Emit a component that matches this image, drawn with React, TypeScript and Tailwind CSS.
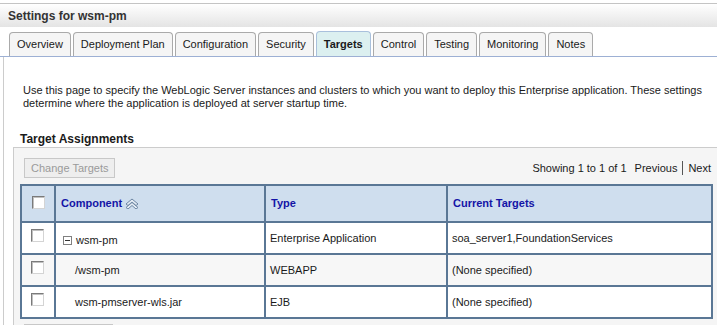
const tabs = [
  "Overview",
  "Deployment Plan",
  "Configuration",
  "Security",
  "Targets",
  "Control",
  "Testing",
  "Monitoring",
  "Notes",
];

const rows = [
  { name: "wsm-pm", type: "Enterprise Application", targets: "soa_server1,FoundationServices", tree: true },
  { name: "/wsm-pm", type: "WEBAPP", targets: "(None specified)", tree: false },
  { name: "wsm-pmserver-wls.jar", type: "EJB", targets: "(None specified)", tree: false },
];

const CheckBox = () => (
  <span className="inline-block w-[13px] h-[13px] border border-[#7a7a7a] border-r-[#d4d4d4] border-b-[#d4d4d4] bg-white shadow-[inset_1px_1px_0_#c0c0c0]" />
);

const SortIcon = () => (
  <svg width="14" height="11" viewBox="0 0 14 11" className="inline-block ml-[3px]">
    <path d="M1 6 L7 1 L13 6 L11 7.5 L7 4 L3 7.5 Z" fill="#e4ecf4" stroke="#6d86a3" strokeWidth="1" />
    <path d="M1 9.5 L7 4.5 L13 9.5 L11 11 L7 7.5 L3 11 Z" fill="#e4ecf4" stroke="#6d86a3" strokeWidth="1" />
  </svg>
);

const Collapse = () => (
  <span className="inline-flex items-center justify-center w-[9px] h-[9px] border border-[#808080] bg-white mr-[4px]">
    <span className="block w-[5px] h-px bg-[#333]" />
  </span>
);

export default function App() {
  return (
    <div className="w-[717px] h-[325px] overflow-hidden bg-white text-[11px] text-[#1a1a1a] font-['Liberation_Sans',Arial,sans-serif]">
      <div className="mt-[3px] border-t border-[#c4c4c4]">
        <div className="h-[23px] flex items-center pl-[8px] bg-gradient-to-b from-white to-[#e4e4e4] font-bold text-[12px] text-[#333]">
          Settings for wsm-pm
        </div>
      </div>

      <div className="flex items-end gap-[2px] pl-[9px] pt-[4px] border-b border-[#9db0d4]">
        {tabs.map((t) =>
          t === "Targets" ? (
            <div
              key={t}
              className="h-[25px] px-[7px] flex items-center rounded-t-[4px] border border-b-0 border-[#a9c0dc] bg-[#dcf0f0] font-bold"
            >
              {t}
            </div>
          ) : (
            <div
              key={t}
              className="h-[24px] px-[7px] flex items-center rounded-t-[4px] border border-b-0 border-[#aaaaaa] bg-[#f5f5f5]"
            >
              {t}
            </div>
          )
        )}
      </div>

      <div className="ml-[3px] border-l border-[#cccccc] pt-[27px]">
        <p className="pl-[19px] leading-[13px] whitespace-nowrap">
          Use this page to specify the WebLogic Server instances and clusters to which you want to deploy this Enterprise application. These settings
          <br />
          determine where the application is deployed at server startup time.
        </p>

        <h2 className="pl-[16px] mt-[21px] font-bold text-[12px] leading-[16px]">Target Assignments</h2>

        <div className="ml-[9px] border-t border-l border-[#cccccc] bg-[#f5f5f5] pb-[10px]">
          <div className="flex items-center justify-between pl-[10px] pr-[6px] pt-[10px]">
            <button className="h-[20px] px-[6px] border border-[#c8c8c8] bg-[#eeeeee] text-[#9a9a9a]">Change Targets</button>
            <div className="flex items-center">
              <span>Showing 1 to 1 of 1</span>
              <span className="ml-[8px]">Previous</span>
              <span className="mx-[5px] w-px h-[14px] bg-[#555]" />
              <span>Next</span>
            </div>
          </div>

          <table className="ml-[6px] mt-[6px] w-[693px] table-fixed border-collapse border-2 border-[#5a7795]">
            <colgroup>
              <col className="w-[34px]" />
              <col className="w-[210px]" />
              <col className="w-[182px]" />
              <col />
            </colgroup>
            <thead>
              <tr className="h-[37px] bg-[#cfdeee] text-[#1414a6] font-bold">
                <th className="border-2 border-[#5a7795] text-center align-middle">
                  <span className="inline-flex mt-[2px]"><CheckBox /></span>
                </th>
                <th className="border-2 border-[#5a7795] text-left pl-[5px]">
                  <span className="inline-flex items-center">Component<SortIcon /></span>
                </th>
                <th className="border-2 border-[#5a7795] text-left pl-[5px]">Type</th>
                <th className="border-2 border-[#5a7795] text-left pl-[5px]">Current Targets</th>
              </tr>
            </thead>
            <tbody>
              {rows.map((r, i) => (
                <tr key={r.name} className={i === 1 ? "h-[32px] bg-[#f7f7f7]" : "h-[32px] bg-white"}>
                  <td className="border-2 border-[#5a7795] pl-[9px]">
                    <span className="inline-flex"><CheckBox /></span>
                  </td>
                  <td className="border-2 border-[#5a7795]">
                    {r.tree ? (
                      <span className="inline-flex items-center pl-[7px] pt-[4px]">
                        <Collapse />
                        {r.name}
                      </span>
                    ) : (
                      <span className="pl-[19px]">{r.name}</span>
                    )}
                  </td>
                  <td className="border-2 border-[#5a7795] pl-[4px]">{r.type}</td>
                  <td className="border-2 border-[#5a7795] pl-[4px]">{r.targets}</td>
                </tr>
              ))}
            </tbody>
          </table>

          <div className="ml-[10px] mt-[5px] h-[20px] w-[89px] border border-[#c8c8c8] bg-[#eeeeee]" />
        </div>
      </div>
    </div>
  );
}
